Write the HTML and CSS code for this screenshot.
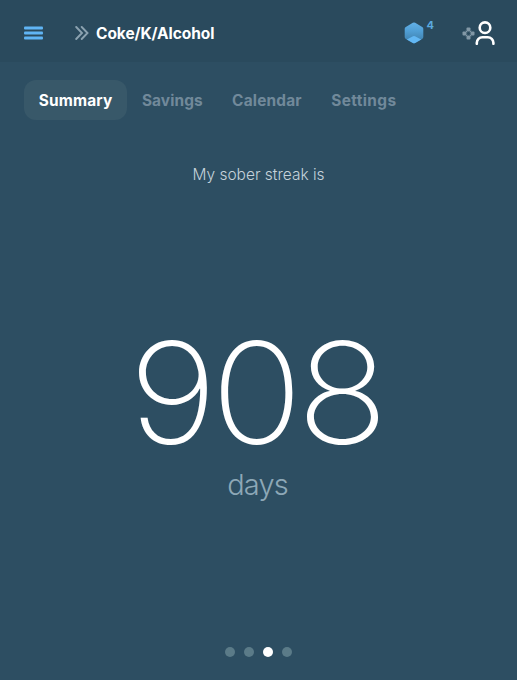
FILE: index.html
```html
<!DOCTYPE html>
<html lang="en">
<head>
<meta charset="utf-8">
<title>Sober streak</title>
<link rel="stylesheet" href="styles.css">
</head>
<body>
<header class="topbar">
  <svg class="menu" width="20" height="14" viewBox="0 0 20 14"><rect x="0" y=".5" width="19" height="3" rx="1"/><rect x="0" y="5.500" width="19" height="3" rx="1"/><rect x="0" y="10.500" width="19" height="3" rx="1"/></svg>
  <svg class="chevrons" width="14" height="14" viewBox="0 0 14 14"><path d="M1.200 1l5.800 6-5.800 6M6.700 1l5.800 6-5.800 6"/></svg>
  <h1 class="title">Coke/K/Alcohol</h1>
  <svg class="gem" width="20" height="22" viewBox="0 0 20 22">
    <defs>
      <linearGradient id="face" x1="0" y1="0" x2="0" y2="1"><stop offset="0" stop-color="#62b1e8"/><stop offset=".4" stop-color="#509fd5"/><stop offset="1" stop-color="#3c7ba6"/></linearGradient>
    </defs>
    <path fill="url(#face)" d="M8.800.8a2.400 2.400 0 0 1 2.400 0l7 4.100a2 2 0 0 1 1.100 1.800v8.400a2 2 0 0 1-1.100 1.800l-7 4.100a2.400 2.400 0 0 1-2.400 0l-7-4.100a2 2 0 0 1-1.100-1.800V6.700a2 2 0 0 1 1.100-1.800z"/>
    <path class="gem-base" d="M2.800 17.500L9 14.200a2 2 0 0 1 2 0l6.200 3.300-6 3.500a2.400 2.400 0 0 1-2.400 0z"/>
  </svg>
  <span class="count">4</span>
  <svg class="flower" width="13" height="13" viewBox="0 0 13 13"><g class="petals"><rect x="4.500" y=".5" width="4" height="4" rx="1"/><rect x="4.500" y="8.500" width="4" height="4" rx="1"/><rect x=".5" y="4.500" width="4" height="4" rx="1"/><rect x="8.500" y="4.500" width="4" height="4" rx="1"/></g><path class="petal-links" d="M3.800 3.800l1.400 1.400M9.200 3.800l-1.400 1.400M3.800 9.200l1.400-1.400M9.200 9.200l-1.400-1.400"/></svg>
  <svg class="person" width="20" height="24" viewBox="0 0 20 24"><circle cx="10" cy="6.700" r="5.300"/><path d="M1.800 22.800v-1a5.600 5.600 0 0 1 5.600-5.600h5.400a5.600 5.600 0 0 1 5.600 5.600v1"/></svg>
</header>
<nav class="tabs">
  <a class="tab active">Summary</a>
  <a class="tab savings">Savings</a>
  <a class="tab">Calendar</a>
  <a class="tab settings">Settings</a>
</nav>
<main class="streak">
  <p class="label">My sober streak is</p>
  <div class="number">908</div>
  <p class="unit">days</p>
</main>
<footer class="dots"><i class="dot"></i><i class="dot"></i><i class="dot current"></i><i class="dot"></i></footer>
</body>
</html>
```
FILE: styles.css
```css
* { box-sizing: border-box; }
body {
  margin: 0;
  width: 517px;
  height: 680px;
  overflow: hidden;
  display: flex;
  flex-direction: column;
  background: #2d4e62;
  color: #fff;
  font-family: Inter, "Liberation Sans", sans-serif;
}
svg { display: block; flex: none; }
.topbar {
  height: 62px;
  flex: none;
  display: flex;
  align-items: center;
  padding: 4px 22.5px 0 24px;
  background: #2a4a5d;
}
.menu { fill: #60b5f5; }
.chevrons { margin-left: 31px; fill: none; stroke: #8ba2b0; stroke-width: 1.9; stroke-linecap: round; }
.title { margin: 0 auto 0 7px; padding-top: 2px; font-size: 15.5px; line-height: 20px; font-weight: 700; letter-spacing: -.08px; }
.gem-base { fill: #62b7f3; }
.count { width: 8px; margin: -17px 27px 0 2.500px; color: #5ba9df; font-size: 11px; line-height: 14px; font-weight: 700; }
.petals { fill: #8298a6; }
.petal-links { stroke: #8298a6; stroke-width: 1; }
.person { fill: none; stroke: #fff; stroke-width: 2.6; stroke-linecap: round; }
.tabs { display: flex; height: 40px; margin: 18px 0 0 24px; flex: none; }
.tab {
  padding: 0 14.7px;
  border-radius: 12px;
  color: #71899a;
  font-size: 15.4px;
  line-height: 42px;
  font-weight: 700;
  letter-spacing: .2px;
}
.savings { letter-spacing: .1px; }
.settings { letter-spacing: .4px; }
.active { background: #385869; color: #fff; }
.streak { flex: 1; text-align: center; }
.label { margin: 43px 0 0; font-size: 15.5px; line-height: 24px; font-weight: 300; color: #c5d2da; }
.number { margin-top: 135px; font-size: 141px; line-height: 142px; font-weight: 200; letter-spacing: -5.5px; text-indent: -5.500px; transform: scaleX(1.075); }
.unit { margin: 2px 0 0; font-size: 29px; line-height: 38px; font-weight: 300; letter-spacing: -.9px; text-indent: -2px; color: #8da8b7; }
.dots { display: flex; justify-content: center; gap: 9.300px; height: 33px; flex: none; }
.dot { width: 10px; height: 10px; border-radius: 50%; background: #5b7b88; }
.current { background: #fff; }
```
